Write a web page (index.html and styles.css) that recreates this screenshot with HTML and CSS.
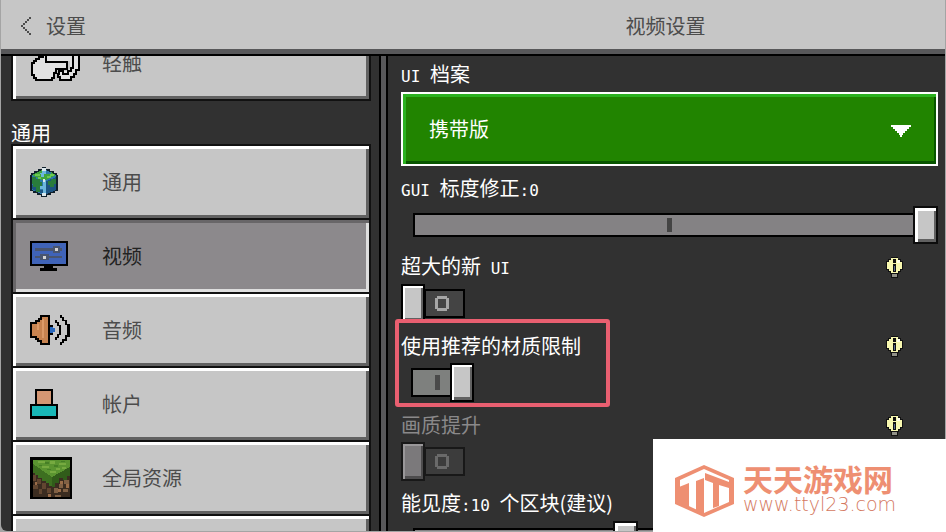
FILE: index.html
```html
<!DOCTYPE html>
<html lang="zh-CN">
<head>
<meta charset="utf-8">
<meta name="viewport" content="width=device-width, initial-scale=1">
<title>视频设置</title>
<link rel="stylesheet" href="styles.css">
</head>
<body>
<div class="app">
  <header class="topbar">
    <button class="back" type="button">
      <svg class="back-icon" viewBox="0 0 12 18" shape-rendering="crispEdges" aria-hidden="true"><path fill="#4c4c4c" d="M9 0h2v2h-2zM7 2h2v2h-2zM5 4h2v2h-2zM3 6h2v2h-2zM1 8h2v2h-2zM3 10h2v2h-2zM5 12h2v2h-2zM7 14h2v2h-2zM9 16h2v2h-2z"/></svg>
      <span>设置</span>
    </button>
    <h1 class="title">视频设置</h1>
  </header>

  <div class="content">
    <nav class="sidebar">
      <div class="menu menu-scrolled">
        <button class="item" type="button">
          <span class="icon"><svg width="50" height="36" viewBox="0 0 50 36" shape-rendering="crispEdges" aria-hidden="true">
            <path fill="#e2e2e2" d="M10 12V6h39v18l-2 3-3 4-3 3H31v-3l-3-3 2-2h7l3-3v-7h-3v7H26v3h-2v6l-2 2H6l-4-5V17l5-2z"/>
            <g fill="none" stroke="#000" stroke-width="2">
              <path d="M13 10V12H9V14H6V16H4V18H2V30H4V33H6V35H22V33H24V28H26V24H37V17H16V10"/>
              <path d="M43 6V23H41V26H38V29H33V26H29V29H28V32H30V35H41V32H44V29H46V25H49V6"/>
            </g></svg></span>
          <span>轻触</span>
        </button>
      </div>

      <h2 class="group">通用</h2>

      <div class="menu">
        <button class="item" type="button">
          <span class="icon"><svg width="28" height="30" viewBox="0 0 28 30" shape-rendering="crispEdges" aria-hidden="true">
            <path fill="#10202b" d="M12 0h4v2h4v2h4v2h3v2h1v16h-3v2h-4v2h-4v2h-6v-2H7v-2H3v-2H0V8h1V6h3V4h4V2h4z"/>
            <path fill="#2b78a8" d="M2 8l12-6 12 6v15l-12 5-12-5z"/>
            <path fill="#3fa53c" d="M2 8l10-5v2h4v2h5V5l5 3-12 6z"/>
            <path fill="#1c5482" d="M15 15l11-5v13l-11 5zM2 18h7v5h4v4L2 22z"/>
            <path fill="#297c3c" d="M2 10h4v2h4v3h2v5h-2v3H6v-3H3v-3H2zM18 14h3v-2h5v5h-2v3h-4v-2h-2zM6 22h4v3H6z"/>
            <path fill="#6cc950" d="M5 7h5v2H5zM17 9h4v2h-4zM20 7h4v2h-4zM8 10h3v2H8z"/>
            <path fill="#6cb7dd" d="M12 3h4v4h-2v3h-3V7h-1V6h2zM13 13h3v14h-3zM10 19h3v3h-3z"/>
            <path fill="#dbe8ed" d="M12 1h4v3h-4zM12 26h4v3h-4zM13 12h2v3h-2z"/>
          </svg></span>
          <span>通用</span>
        </button>
        <button class="item selected" type="button" aria-current="page">
          <span class="icon"><svg width="38" height="30" viewBox="0 0 38 30" shape-rendering="crispEdges" aria-hidden="true">
            <path fill="#000" d="M0 0h38v25H23v2h4v3H10v-3h4v-2H0z"/>
            <path fill="#3f63b8" d="M2 2h34v21H2z"/>
            <path fill="#49556f" d="M5 7h27v3H5zM5 15h27v2H5zM23 5h7v7h-7zM10 13h9v6h-9z"/>
            <path fill="#d4d4d4" d="M25 7h3v3h-3zM13 15h3v3h-3z"/>
          </svg></span>
          <span>视频</span>
        </button>
        <button class="item" type="button">
          <span class="icon"><svg width="40" height="30" viewBox="0 0 40 30" shape-rendering="crispEdges" aria-hidden="true">
            <path fill="#000" d="M10 0h10v30H10v-3H7v-2H5v-2H0V7h5V5h3V3h2z"/>
            <path fill="#c78350" d="M12 2h6v26h-6v-3H9v-2H7v-2H2V9h5V7h3V5h2z"/>
            <path fill="#dc9a68" d="M12 4h2v19h-2zM7 9h2v6H7z"/>
            <path fill="#2867bd" d="M20 12h3v1h2v4h-2v1h-3z"/>
            <path fill="#000" d="M20 10h3v2h-3zM20 18h3v2h-3zM25 5h2v2h2v3h2v10h-2v3h-2v2h-2v-3h2v-3h2v-8h-2V8h-2zM30 0h2v2h2v3h3v4h3v13h-3v4h-3v2h-2v2h-2v-3h2v-3h3v-4h2V10h-2V6h-3V3h-2z"/>
          </svg></span>
          <span>音频</span>
        </button>
        <button class="item" type="button">
          <span class="icon"><svg width="28" height="30" viewBox="0 0 28 30" shape-rendering="crispEdges" aria-hidden="true">
            <path fill="#000" d="M5 0h18v15h5v15H0V15h5z"/>
            <path fill="#d49673" d="M7 2h14v13H7z"/>
            <path fill="#18b7b7" d="M2 17h24v10H2z"/>
          </svg></span>
          <span>帐户</span>
        </button>
        <button class="item" type="button">
          <span class="icon"><svg width="42" height="42" viewBox="0 0 42 42" shape-rendering="crispEdges" aria-hidden="true">
            <path fill="#000" d="M0 0h42v42H0z"/>
            <path fill="#3b2c20" d="M3 3h37v37H3z"/>
            <path fill="#5a9430" d="M3 3h37v9L22 21 3 8z"/>
            <path fill="#3d6f20" d="M3 7l19 13v9h-3v-3h-3v-2h-4v-3H8v-3H5v-2H3z"/>
            <path fill="#315c1a" d="M22 20l18-10v9h-3v4h-4v-2h-4v5h-4v4h-3z"/>
            <path fill="#76aa40" d="M8 4h7v2H8zM20 4h5v3h-5zM12 9h7v2h-7zM29 6h7v2h-7zM20 14h6v2h-6zM32 10h4v2h-4zM26 11h4v2h-4z"/>
            <path fill="#467f26" d="M15 5h4v2h-4zM24 8h4v2h-4zM9 8h3v1H9zM17 12h4v1h-4zM31 4h4v1h-4z"/>
            <path fill="#624630" d="M3 18h3v6H3zM7 22h4v5H7zM12 26h4v6h-4zM3 28h5v4H3zM17 31h4v5h-4zM9 32h3v5H9z"/>
            <path fill="#806044" d="M24 31h4v5h-4zM29 27h4v4h-4zM34 23h5v4h-5zM33 32h5v3h-5zM25 38h6v2h-6z"/>
            <path fill="#9a6c48" d="M30 24h3v3h-3zM36 27h3v4h-3zM28 32h3v3h-3zM18 37h3v3h-3zM5 25h2v3H5z"/>
          </svg></span>
          <span>全局资源</span>
        </button>
        <button class="item" type="button" aria-label="存储"></button>
      </div>
    </nav>

    <main class="panel">
      <div class="setting">
        <label class="label" for="profile"><span><span class="latin">UI </span>档案</span></label>
        <div class="dropdown">
          <select id="profile"><option>携带版</option></select>
          <svg class="arrow" viewBox="0 0 20 12" shape-rendering="crispEdges" aria-hidden="true"><path fill="#fff" d="M0 0h20v2h-2v2h-2v2h-2v2h-2v2h-1v2H9v-2H8V8H6V6H4V4H2V2H0z"/></svg>
        </div>
      </div>

      <div class="setting">
        <label class="label" for="scale"><span><span class="latin">GUI </span>标度修正<span class="latin">:0</span></span></label>
        <input class="slider ticked" id="scale" type="range" min="0" max="100" value="100">
      </div>

      <div class="setting">
        <label class="label" for="large"><span>超大的新<span class="latin"> UI</span></span>
          <svg class="bulb" viewBox="0 0 17 21"><use href="#bulb"/></svg></label>
        <input class="toggle" id="large" type="checkbox">
      </div>

      <div class="setting highlighted">
        <label class="label" for="limit"><span>使用推荐的材质限制</span>
          <svg class="bulb" viewBox="0 0 17 21"><use href="#bulb"/></svg></label>
        <input class="toggle" id="limit" type="checkbox" checked>
      </div>

      <div class="setting">
        <label class="label muted" for="quality"><span>画质提升</span>
          <svg class="bulb" viewBox="0 0 17 21"><use href="#bulb"/></svg></label>
        <input class="toggle" id="quality" type="checkbox" disabled>
      </div>

      <div class="setting">
        <label class="label" for="distance"><span>能见度<span class="latin">:10 </span>个区块(建议)</span></label>
        <input class="slider" id="distance" type="range" min="0" max="100" value="40">
      </div>
    </main>
  </div>
</div>

<aside class="brand">
  <svg class="brand-logo" viewBox="0 0 59 52" aria-hidden="true">
    <path fill="#ee8f72" d="M29 0l30 13v26L29 52 0 39V13z"/>
    <path fill="#fff" d="M5 15L29 4l25 11v22L29 48 5 37z"/>
    <path fill="#ee8f72" d="M4 22l10-4v25L4 38zM21 16l8-3v36l-8-3zM30 8l24 9v6l-10-3v21l-6 2V18l-8-3z"/>
  </svg>
  <div class="brand-text">
    <strong class="brand-name">天天游戏网</strong>
    <span class="brand-url">www.ttyl23.com</span>
  </div>
</aside>

<svg class="defs" aria-hidden="true">
  <symbol id="bulb" viewBox="0 0 17 21">
    <g shape-rendering="crispEdges">
      <path fill="#111" d="M5 0h7v2h3v2h2v9h-2v2h-2v2h-1v4H5v-4H4v-2H2v-2H0V4h2V2h3z"/>
      <path fill="#f8f8b0" d="M5 1h7v2h2v2h2v7h-2v2h-2v2H5v-2H3v-2H1V5h2V3h2z"/>
      <path fill="#ffffe8" d="M11 3h3v3h-3z"/>
      <path fill="#111" d="M7 2h3v4H7zM7 7h3v8H7z"/>
      <path fill="#596b96" d="M8 9h1v5H8z"/>
      <path fill="#919188" d="M6 17h5v3H6z"/>
    </g>
  </symbol>
</svg>
</body>
</html>
```
FILE: styles.css
```css
*,
*::before,
*::after {
  box-sizing: border-box;
}

body {
  margin: 0;
  background: #a4a4a4;
  color: #fff;
  font: 400 20px/24px "Noto Sans CJK SC", sans-serif;
}

button,
select {
  font: inherit;
}

.app {
  display: flex;
  flex-direction: column;
  height: 100vh;
  padding: 0 1px 1px;
  overflow: hidden;
}

.topbar,
.content {
  display: grid;
  grid-template-columns: 385px minmax(0, 1fr);
}

.topbar {
  align-items: center;
  height: 56px;
  flex: none;
  border-bottom: 2px solid #000;
  background: #c6c6c6;
  box-shadow: inset 0 -5px #58585a;
  color: #4c4c4c;
  padding-bottom: 3px;
}

.back {
  display: flex;
  align-items: center;
  gap: 14px;
  padding: 0 0 0 19px;
  border: 0;
  background: none;
  color: inherit;
}

.back-icon {
  width: 12px;
  height: 18px;
}

.title {
  margin: 0;
  font-size: 20px;
  font-weight: inherit;
  text-align: center;
}

.content {
  flex: 1;
  min-height: 0;
  border-radius: 0 0 0 6px;
  background: #313131;
  overflow: hidden;
}

.sidebar {
  min-height: 0;
  overflow: hidden;
  padding: 0 10px;
  border-right: 5px solid #58585a;
  box-shadow: inset -2px 0 #000;
}

.menu {
  display: flex;
  flex-direction: column;
}

.menu-scrolled {
  margin-top: -31px;
}

.item {
  display: flex;
  align-items: center;
  height: 76px;
  padding: 0 17px;
  border: 2px solid #111;
  background: #c6c6c6;
  box-shadow: inset 3px 3px #fff, inset -3px -3px #616161;
  color: #4c4c4c;
}

.item + .item {
  margin-top: -2px;
}

.item.selected {
  background: #8c898c;
  box-shadow: inset 3px 3px #686668, inset -3px -3px #dedede;
  color: #222;
}

.icon {
  display: flex;
  flex: none;
  width: 72px;
}

.group {
  margin: 0;
  height: 43px;
  padding-top: 20px;
  font-size: 20px;
  font-weight: inherit;
}

.panel {
  display: flex;
  flex-direction: column;
  gap: 11px;
  min-height: 0;
  padding: 7px 7px 0 13px;
  border-left: 2px solid #000;
  overflow: hidden;
}

.setting {
  display: flex;
  flex-direction: column;
  flex: none;
  align-items: flex-start;
  gap: 5px;
  position: relative;
}

.label {
  display: flex;
  justify-content: space-between;
  align-items: center;
  align-self: stretch;
  height: 24px;
  padding-right: 35px;
  white-space: nowrap;
}

.muted {
  color: #8a898a;
}

.latin {
  font-family: "DejaVu Sans Mono", monospace;
  font-size: 16px;
  white-space: pre;
}

.bulb {
  width: 17px;
  height: 21px;
}

.defs {
  position: absolute;
  width: 0;
  height: 0;
}

.dropdown {
  position: relative;
  align-self: stretch;
}

.dropdown select {
  display: block;
  appearance: none;
  width: 100%;
  height: 74px;
  padding: 0 60px 0 26px;
  border: 2px solid #fff;
  border-radius: 0;
  background: #218400;
  box-shadow: inset 3px 3px #2cb120, inset -2px -3px #085500;
  color: #fff;
}

.arrow {
  position: absolute;
  top: 33px;
  right: 27px;
  width: 20px;
  height: 12px;
  pointer-events: none;
}

.slider {
  appearance: none;
  align-self: stretch;
  height: 38px;
  margin: 0 0 0 12px;
  background: none;
}

.slider::-webkit-slider-runnable-track {
  height: 24px;
  background: #848284;
  box-shadow: inset 0 0 0 2px #000;
}

.ticked::-webkit-slider-runnable-track {
  background: linear-gradient(#444, #444) calc(50% - 6px) 50% / 5px 14px no-repeat #848284;
}

.slider::-webkit-slider-thumb {
  appearance: none;
  box-sizing: border-box;
  width: 25px;
  height: 38px;
  margin-top: -7px;
  border: 2px solid #0c0c0c;
  background: #c6c6c6;
  box-shadow: inset 3px 3px #fff, inset -2px -3px #616161;
}

.toggle {
  --edge: #000;
  --knob: #c6c6c6;
  --knob-light: #fff;
  --knob-dark: #616161;
  --track: #444;
  --mark: #a6a6a6;
  appearance: none;
  display: flex;
  align-items: center;
  height: 39px;
  margin: 0;
}

.toggle::before {
  content: "";
  width: 24px;
  height: 39px;
  border: 2px solid var(--edge);
  background: var(--knob);
  box-shadow: inset 2px 2px var(--knob-light), inset -2px -3px var(--knob-dark);
}

.toggle::after {
  content: "";
  width: 41px;
  height: 29px;
  margin-left: -1px;
  border: 2px solid var(--edge);
  background:
    linear-gradient(var(--mark), var(--mark)) 11px 5px / 10px 3px no-repeat,
    linear-gradient(var(--mark), var(--mark)) 11px 17px / 10px 3px no-repeat,
    linear-gradient(var(--mark), var(--mark)) 9px 7px / 3px 11px no-repeat,
    linear-gradient(var(--mark), var(--mark)) 20px 7px / 3px 11px no-repeat,
    var(--track);
}

.toggle:checked {
  flex-direction: row-reverse;
  margin-left: 10px;
}

.toggle:checked::before {
  z-index: 1;
  margin-left: -2px;
}

.toggle:checked::after {
  margin-left: 0;
  background: linear-gradient(#4a4a4a, #4a4a4a) 22px 5px / 5px 15px no-repeat #7e807e;
}

.toggle:disabled {
  --edge: #181818;
  --knob: #7b797b;
  --knob-light: #999799;
  --knob-dark: #4d4c4d;
  --track: #3c3c3c;
  --mark: #6a6a6a;
}

.highlighted::after {
  content: "";
  position: absolute;
  top: -15px;
  bottom: -5px;
  left: -6px;
  width: 215px;
  border: 4px solid #e95f70;
  border-radius: 3px;
  pointer-events: none;
}

.brand {
  position: fixed;
  right: 0;
  bottom: 0;
  display: flex;
  align-items: center;
  gap: 9px;
  width: 293px;
  height: 93px;
  padding: 10px 0 0 22px;
  background: #fff;
}

.brand-logo {
  flex: none;
  width: 59px;
  height: 52px;
}

.brand-text {
  display: flex;
  flex-direction: column;
  color: #ee8f72;
}

.brand-name {
  font-size: 30px;
  font-weight: 700;
  line-height: 26px;
}

.brand-url {
  font: 200 19px/26px "DejaVu Sans", sans-serif;
  color: #d47860;
}
```
